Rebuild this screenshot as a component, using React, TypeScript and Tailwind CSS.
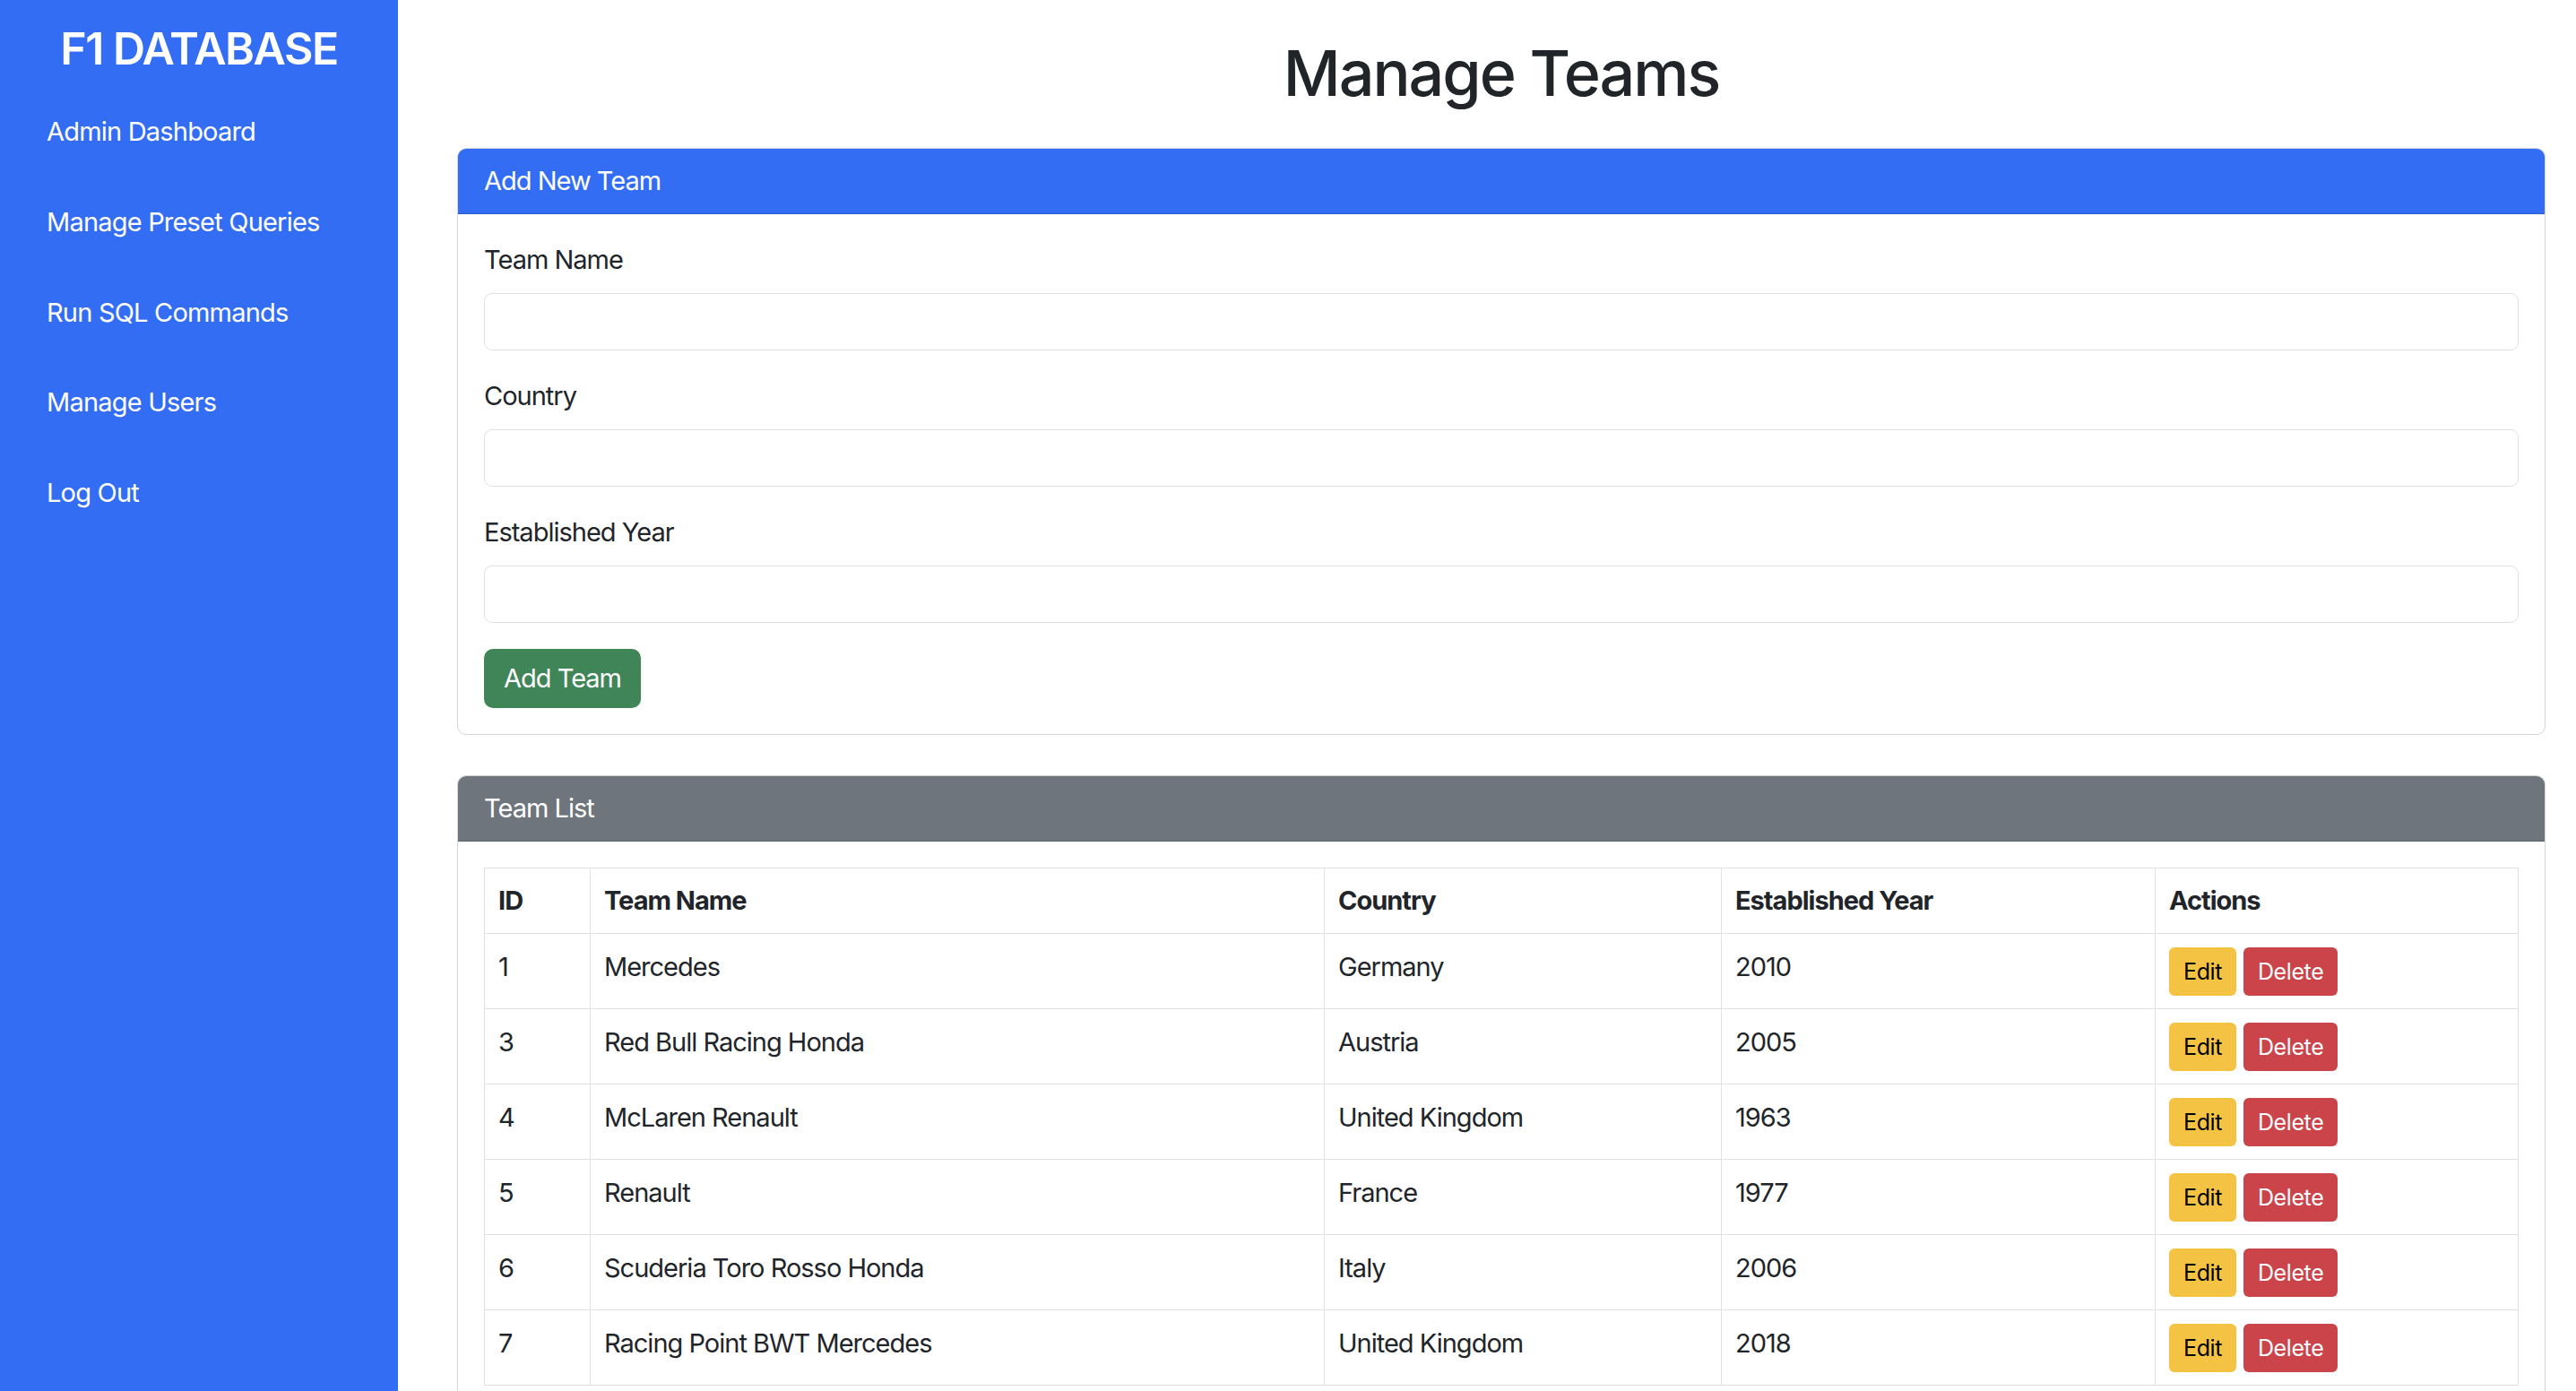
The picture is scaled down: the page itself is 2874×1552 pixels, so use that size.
import React from "react";

interface Team {
  id: number;
  name: string;
  country: string;
  year: number;
}

const teams: Team[] = [
  { id: 1, name: "Mercedes", country: "Germany", year: 2010 },
  { id: 3, name: "Red Bull Racing Honda", country: "Austria", year: 2005 },
  { id: 4, name: "McLaren Renault", country: "United Kingdom", year: 1963 },
  { id: 5, name: "Renault", country: "France", year: 1977 },
  { id: 6, name: "Scuderia Toro Rosso Honda", country: "Italy", year: 2006 },
  { id: 7, name: "Racing Point BWT Mercedes", country: "United Kingdom", year: 2018 },
];

const navLinks = [
  "Admin Dashboard",
  "Manage Preset Queries",
  "Run SQL Commands",
  "Manage Users",
  "Log Out",
];

const fields = ["Team Name", "Country", "Established Year"];

const cell = "border border-[#dee2e6] px-[15px] pt-[15px] pb-[14px] align-top";

const Sidebar: React.FC = () => (
  <aside className="w-[444px] shrink-0 bg-[#336df4] text-white pt-[24px]">
    <h1 className="text-center text-[50px] leading-[60px] font-semibold tracking-[-1.5px]">
      F1 DATABASE
    </h1>
    <nav className="mt-[41px] flex flex-col">
      {navLinks.map((link) => (
        <a
          key={link}
          href="#"
          className="block pl-[52px] h-[100.8px] text-[29px] leading-[44px] tracking-[-0.8px] text-white"
        >
          {link}
        </a>
      ))}
    </nav>
  </aside>
);

const AddTeamCard: React.FC = () => (
  <div className="rounded-[10px] border border-[#d6d6d6] bg-white overflow-hidden">
    <div className="bg-[#336df4] text-white px-[29px] py-[14px] text-[29px] leading-[44px] border-b border-[#2c5fd6]">
      Add New Team
    </div>
    <div className="p-[29px]">
      {fields.map((label) => (
        <div key={label} className="mb-[29px]">
          <label className="block text-[29px] leading-[44px] mb-[15px] text-[#212529]">
            {label}
          </label>
          <input
            type="text"
            className="block w-full h-[64px] rounded-[9px] border border-[#dee2e6] bg-white px-[22px] text-[29px] outline-none"
          />
        </div>
      ))}
      <button className="h-[66px] px-[22px] rounded-[10px] bg-[#408558] text-white text-[29px] leading-[44px]">
        Add Team
      </button>
    </div>
  </div>
);

const TeamListCard: React.FC = () => (
  <div className="mt-[45px] rounded-[10px] border border-[#d6d6d6] bg-white overflow-hidden">
    <div className="bg-[#6e757d] text-white px-[29px] py-[14px] text-[29px] leading-[44px] border-b border-[#5d646b]">
      Team List
    </div>
    <div className="p-[29px]">
      <table className="w-full table-fixed border-collapse text-[29px] leading-[44px] text-[#212529]">
        <colgroup>
          <col className="w-[118px]" />
          <col className="w-[819px]" />
          <col className="w-[443px]" />
          <col className="w-[484px]" />
          <col className="w-[405px]" />
        </colgroup>
        <thead>
          <tr>
            {["ID", "Team Name", "Country", "Established Year", "Actions"].map((h) => (
              <th
                key={h}
                className="border border-[#dee2e6] px-[15px] py-[14px] text-left font-bold align-top"
              >
                {h}
              </th>
            ))}
          </tr>
        </thead>
        <tbody>
          {teams.map((team) => (
            <tr key={team.id}>
              <td className={cell}>{team.id}</td>
              <td className={cell}>{team.name}</td>
              <td className={cell}>{team.country}</td>
              <td className={cell}>{team.year}</td>
              <td className={cell}>
                <div className="flex gap-[8px]">
                  <button className="h-[54px] px-[16px] rounded-[6px] bg-[#f5c344] text-black text-[25px] leading-[54px] tracking-[-0.4px]">
                    Edit
                  </button>
                  <button className="h-[54px] px-[16px] rounded-[6px] bg-[#cb444a] text-white text-[25px] leading-[54px] tracking-[-0.4px]">
                    Delete
                  </button>
                </div>
              </td>
            </tr>
          ))}
        </tbody>
      </table>
    </div>
  </div>
);

export default function App() {
  return (
    <div
      className="flex h-[1552px] overflow-hidden bg-white text-[#212529] tracking-[-1px]"
      style={{ fontFamily: "Inter, 'Noto Sans', sans-serif" }}
    >
      <Sidebar />
      <main className="flex-1 pl-[66px] pr-[36px] pt-[40px]">
        <h2 className="text-center text-[70px] leading-[84px] font-medium tracking-[-2px] mb-[41px]">
          Manage Teams
        </h2>
        <AddTeamCard />
        <TeamListCard />
      </main>
    </div>
  );
}
